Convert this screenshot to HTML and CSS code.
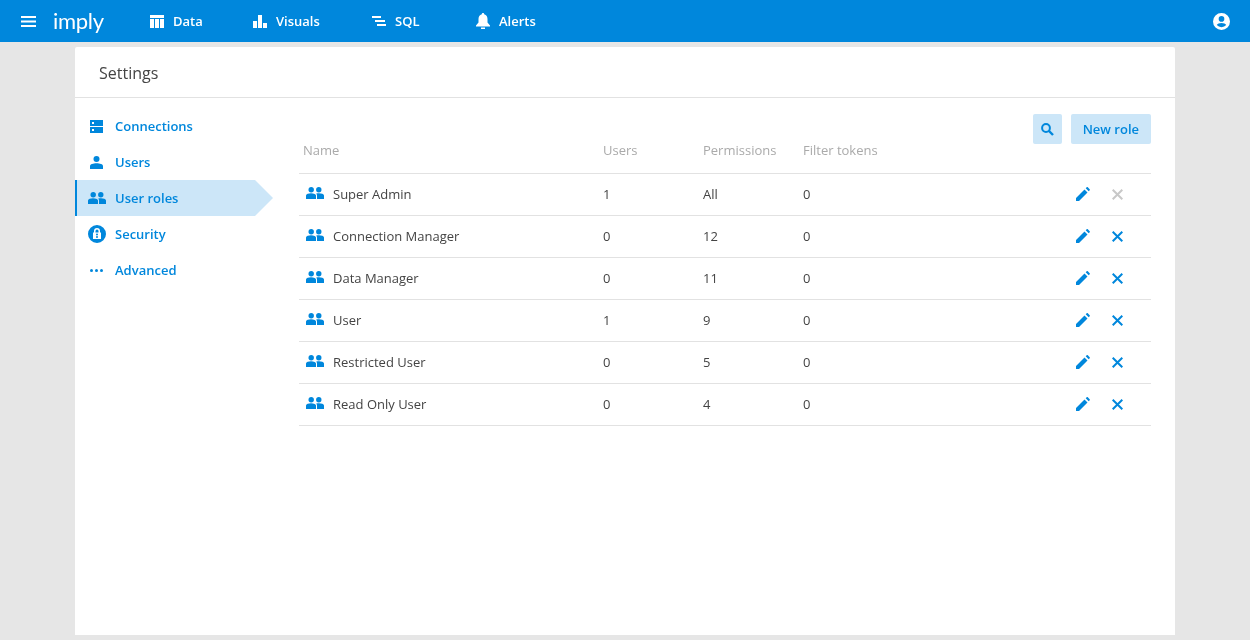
FILE: index.html
```html
<!DOCTYPE html>
<html lang="en">
<head>
<meta charset="utf-8">
<title>Settings</title>
<link rel="stylesheet" href="styles.css">
</head>
<body>
<svg class="defs" width="0" height="0">
  <defs>
    <symbol id="group" viewBox="0 0 18 12"><circle cx="5.200" cy="2.700" r="2.700"/><circle cx="12.800" cy="2.700" r="2.700"/><path d="M0 12V8.500C0 7 2.800 6.300 5 6.300c1.300 0 2.700.2 3.700.7C9.600 7.500 10 8 10 8.500V12zM11 12V8.500c0-.8-.3-1.500-.8-2 .9-.2 1.900-.3 2.800-.3 2.300 0 5 .8 5 2.300V12z"/></symbol>
    <symbol id="pencil" viewBox="0 0 14 14"><path d="M0 14v-3L8.500 2.500 11.500 5.500 3 14zM9.700 1.300l1-1c.3-.3.8-.3 1.100 0l1.900 1.900c.3.300.3.800 0 1.100l-1 1z"/></symbol>
    <symbol id="cross" viewBox="0 0 11 11"><path d="M.7.7l9.600 9.600M10.300.7L.7 10.300" fill="none" stroke="currentColor" stroke-width="2"/></symbol>
  </defs>
</svg>
<header class="topbar">
  <svg class="menu-icon" viewBox="0 0 15 11" width="15" height="11"><path d="M0 0h15v2H0zM0 4.500h15v2H0zM0 9h15v2H0z"/></svg>
  <span class="logo">imply</span>
  <nav class="topnav">
    <a class="topnav-item nav-data"><svg viewBox="0 0 14 13" width="14" height="13"><path d="M0 0h14v3H0zM0 4h4v9H0zM5 4h4v9H5zM10 4h4v9h-4z"/></svg>Data</a>
    <a class="topnav-item nav-visuals"><svg viewBox="0 0 14 13" width="14" height="13"><path d="M0 6h4v7H0zM5 0h4v13H5zM10 8h4v5h-4z"/></svg>Visuals</a>
    <a class="topnav-item nav-sql"><svg viewBox="0 0 14 11" width="14" height="11"><path d="M0 0h9v2H0zM3 4h10v2H3zM5 8h9v2H5z"/></svg>SQL</a>
    <a class="topnav-item nav-alerts"><svg viewBox="0 0 14 16" width="14" height="16"><path d="M7 0c.7 0 1.200.5 1.200 1.200C10.500 1.800 11.500 3.800 11.500 6v3.500L14 12.500V13.500H0v-1L2.500 9.500V6c0-2.200 1-4.200 3.300-4.800C5.800.5 6.300 0 7 0zM5 14.400h4V16H5z"/></svg>Alerts</a>
  </nav>
  <svg class="account-icon" viewBox="0 0 18 18" width="17" height="17"><path fill-rule="evenodd" d="M9 0a9 9 0 1 1 0 18A9 9 0 0 1 9 0zm0 3.300a3 3 0 1 0 0 6 3 3 0 0 0 0-6zM9 10.600c-2.200 0-4.500.8-5 2.200a6.600 6.600 0 0 0 10 0c-.5-1.400-2.800-2.200-5-2.200z"/></svg>
</header>
<main class="card">
  <h1 class="card-title">Settings</h1>
  <div class="card-body">
    <aside class="sidebar">
      <a class="side-item"><svg class="side-icon" viewBox="0 0 13 13" width="13" height="13"><path fill-rule="evenodd" d="M0 0h13v6H0zM2 2v2h2V2zM0 7h13v6H0zM2 9v2h2V9z"/></svg>Connections</a>
      <a class="side-item"><svg class="side-icon" viewBox="0 0 13 13" width="13" height="13"><circle cx="6.500" cy="3" r="3"/><path d="M0 13V10c0-1.800 3.200-2.800 6.500-2.800s6.500 1 6.500 2.800v3z"/></svg>Users</a>
      <a class="side-item side-item-active"><svg class="side-icon side-icon-wide" width="18" height="12"><use href="#group"/></svg>User roles</a>
      <a class="side-item"><svg class="side-icon side-icon-wide" viewBox="0 0 18 18" width="18" height="18"><path fill-rule="evenodd" d="M9 0a9 9 0 1 1 0 18A9 9 0 0 1 9 0zM9 3a3 3 0 0 0-3 3v1.500H5V14h8V7.500h-1V6a3 3 0 0 0-3-3zm0 1.500A1.500 1.500 0 0 1 10.500 6v1.500h-3V6A1.500 1.500 0 0 1 9 4.500zM9 8.500a1 1 0 1 1 0 2 1 1 0 0 1 0-2zm0 2.500a1 1 0 1 1 0 2 1 1 0 0 1 0-2z"/></svg>Security</a>
      <a class="side-item"><svg class="side-icon" viewBox="0 0 13 3" width="13" height="3"><circle cx="1.500" cy="1.500" r="1.500"/><circle cx="6.500" cy="1.500" r="1.500"/><circle cx="11.500" cy="1.500" r="1.500"/></svg>Advanced</a>
    </aside>
    <section class="content">
      <div class="toolbar">
        <button class="btn btn-icon"><svg viewBox="0 0 13 13" width="13" height="13"><circle cx="5" cy="5" r="3.900" fill="none" stroke="currentColor" stroke-width="2"/><path d="M8 8l4 4" stroke="currentColor" stroke-width="2.400"/></svg></button>
        <button class="btn">New role</button>
      </div>
      <div class="table-head">
        <span class="col-name">Name</span><span class="col-users">Users</span><span class="col-perm">Permissions</span><span class="col-tokens">Filter tokens</span>
      </div>
      <div class="row">
        <svg class="row-icon" width="18" height="12"><use href="#group"/></svg><span class="row-name">Super Admin</span><span class="col-users">1</span><span class="col-perm">All</span><span class="col-tokens">0</span>
        <svg class="edit" width="14" height="14"><use href="#pencil"/></svg><svg class="remove remove-off" width="11" height="11"><use href="#cross"/></svg>
      </div>
      <div class="row">
        <svg class="row-icon" width="18" height="12"><use href="#group"/></svg><span class="row-name">Connection Manager</span><span class="col-users">0</span><span class="col-perm">12</span><span class="col-tokens">0</span>
        <svg class="edit" width="14" height="14"><use href="#pencil"/></svg><svg class="remove" width="11" height="11"><use href="#cross"/></svg>
      </div>
      <div class="row">
        <svg class="row-icon" width="18" height="12"><use href="#group"/></svg><span class="row-name">Data Manager</span><span class="col-users">0</span><span class="col-perm">11</span><span class="col-tokens">0</span>
        <svg class="edit" width="14" height="14"><use href="#pencil"/></svg><svg class="remove" width="11" height="11"><use href="#cross"/></svg>
      </div>
      <div class="row">
        <svg class="row-icon" width="18" height="12"><use href="#group"/></svg><span class="row-name">User</span><span class="col-users">1</span><span class="col-perm">9</span><span class="col-tokens">0</span>
        <svg class="edit" width="14" height="14"><use href="#pencil"/></svg><svg class="remove" width="11" height="11"><use href="#cross"/></svg>
      </div>
      <div class="row">
        <svg class="row-icon" width="18" height="12"><use href="#group"/></svg><span class="row-name">Restricted User</span><span class="col-users">0</span><span class="col-perm">5</span><span class="col-tokens">0</span>
        <svg class="edit" width="14" height="14"><use href="#pencil"/></svg><svg class="remove" width="11" height="11"><use href="#cross"/></svg>
      </div>
      <div class="row">
        <svg class="row-icon" width="18" height="12"><use href="#group"/></svg><span class="row-name">Read Only User</span><span class="col-users">0</span><span class="col-perm">4</span><span class="col-tokens">0</span>
        <svg class="edit" width="14" height="14"><use href="#pencil"/></svg><svg class="remove" width="11" height="11"><use href="#cross"/></svg>
      </div>
    </section>
  </div>
</main>
</body>
</html>
```
FILE: styles.css
```css
* { box-sizing: border-box; }
html, body { height: 100%; }
body {
  margin: 0;
  height: 640px;
  overflow: hidden;
  display: flex;
  flex-direction: column;
  background: #e6e6e6;
  color: #444;
  font: 13px/18px "Open Sans", "Noto Sans", sans-serif;
  will-change: transform;
}
.defs { position: absolute; }
svg { display: block; fill: currentColor; flex: none; }

.topbar {
  height: 42px;
  flex: none;
  display: flex;
  align-items: center;
  background: #0087dc;
  color: #fff;
  padding: 0 20px 0 21px;
}
.logo {
  margin-left: 17px;
  width: 97px;
  font-size: 22px;
  line-height: 28px;
  letter-spacing: -0.3px;
  font-weight: 400;
  font-family: "Lato", sans-serif;
}
.topnav { display: flex; flex: 1; }
.topnav-item {
  display: flex;
  align-items: center;
  gap: 9px;
  font-weight: 600;
  font-size: 13px;
}
.nav-data { width: 103px; }
.nav-visuals { width: 119px; }
.nav-sql { width: 104px; }

.card {
  width: 1100px;
  height: 588px;
  margin: 5px auto 0;
  background: #fff;
  border-radius: 2px 2px 0 0;
  display: flex;
  flex-direction: column;
}
.card-title {
  margin: 0;
  height: 51px;
  flex: none;
  padding: 0 24px;
  font-size: 16px;
  font-weight: 400;
  line-height: 52px;
  color: #444;
  border-bottom: 1px solid #e2e2e2;
}
.card-body { flex: 1; display: flex; }

.sidebar {
  width: 224px;
  flex: none;
  padding-top: 10px;
}
.side-item {
  position: relative;
  height: 36px;
  width: 180px;
  display: flex;
  align-items: center;
  padding-left: 15px;
  color: #0087dc;
  font-weight: 600;
}
.side-icon { margin-right: 12px; }
.side-icon-wide { margin-left: -2px; margin-right: 9px; width: 18px; }
.side-item-active {
  background: #cce6f8;
  border-left: 2px solid #0087dc;
  padding-left: 13px;
}
.side-item-active::after {
  content: "";
  position: absolute;
  left: 178px;
  top: 0;
  border-left: 18px solid #cce6f8;
  border-top: 18px solid transparent;
  border-bottom: 18px solid transparent;
}

.content { width: 852px; flex: none; padding-top: 16px; }
.toolbar {
  height: 30px;
  display: flex;
  justify-content: flex-end;
  gap: 9px;
}
.btn {
  height: 30px;
  padding: 0 12px;
  border: 0;
  border-radius: 2px;
  background: #cce6f8;
  color: #0087dc;
  font: 600 13px/30px "Open Sans", "Noto Sans", sans-serif;
}
.btn-icon { width: 29px; padding: 0 8px; }

.table-head {
  height: 30px;
  display: flex;
  align-items: flex-start;
  padding-left: 4px;
  color: #aaa;
  border-bottom: 1px solid #e2e2e2;
}
.table-head span { line-height: 14px; margin-top: -1px; }
.table-head .col-name { width: 300px; }
.row {
  height: 42px;
  display: flex;
  align-items: center;
  padding: 0 28px 1px 7px;
  border-bottom: 1px solid #e2e2e2;
}
.row-icon { color: #0087dc; margin: -2px 9px 0 0; }
.row-name { width: 270px; }
.col-users { width: 100px; }
.col-perm { width: 100px; }
.col-tokens { width: 100px; }
.row .col-tokens { flex: 1; }
.edit { color: #0087dc; }
.remove { color: #0087dc; margin-left: 22px; }
.remove-off { color: #c8c8c8; }
```
